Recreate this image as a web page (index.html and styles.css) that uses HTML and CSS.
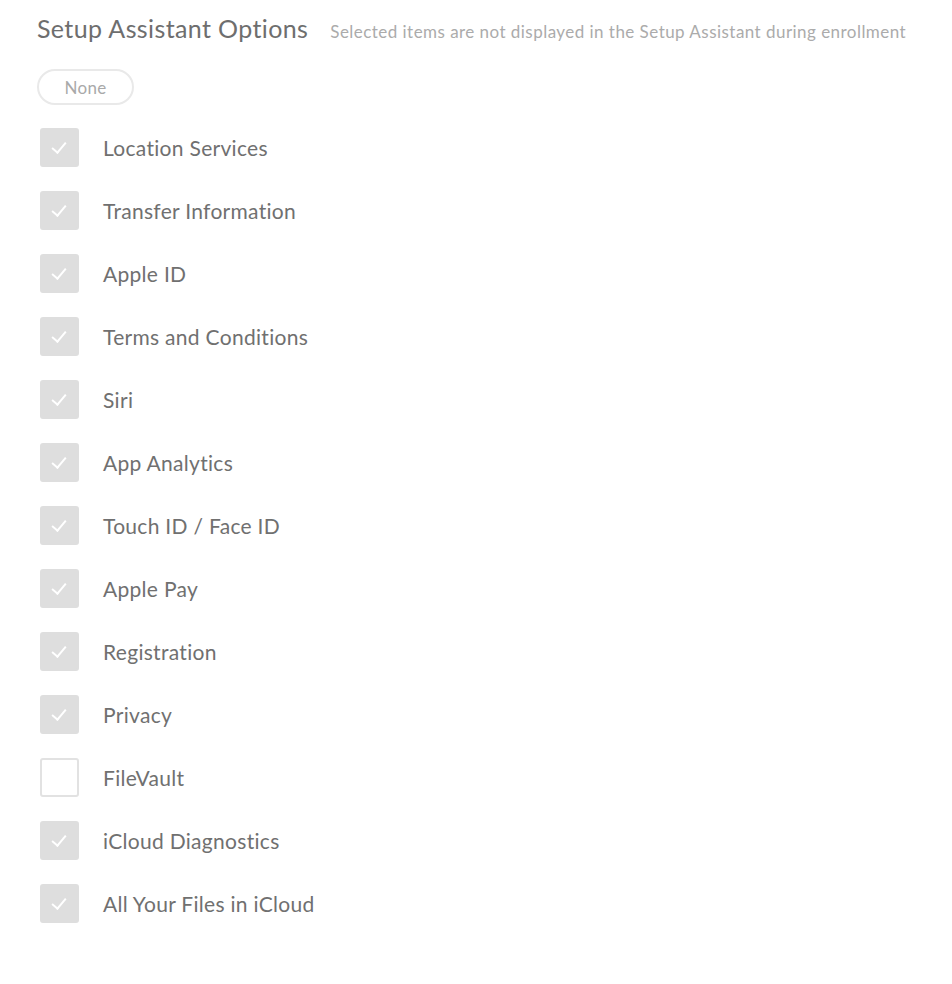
FILE: index.html
```html
<!DOCTYPE html>
<html lang="en">
<head>
    <meta charset="UTF-8">
    <meta name="viewport" content="width=device-width, initial-scale=1.0">
    <title>Setup Assistant Options</title>
    <link rel="stylesheet" href="styles.css">
</head>
<body>
    <div class="page">
        <div class="header">
            <h1>Setup Assistant Options</h1>
            <span class="hint">Selected items are not displayed in the Setup Assistant during enrollment</span>
        </div>
        <button class="pill-button">None</button>

        <ul class="option-list">
            <li class="option checked"><span class="box"></span>Location Services</li>
            <li class="option checked"><span class="box"></span>Transfer Information</li>
            <li class="option checked"><span class="box"></span>Apple ID</li>
            <li class="option checked"><span class="box"></span>Terms and Conditions</li>
            <li class="option checked"><span class="box"></span>Siri</li>
            <li class="option checked"><span class="box"></span>App Analytics</li>
            <li class="option checked"><span class="box"></span>Touch ID / Face ID</li>
            <li class="option checked"><span class="box"></span>Apple Pay</li>
            <li class="option checked"><span class="box"></span>Registration</li>
            <li class="option checked"><span class="box"></span>Privacy</li>
            <li class="option"><span class="box"></span>FileVault</li>
            <li class="option checked"><span class="box"></span>iCloud Diagnostics</li>
            <li class="option checked"><span class="box"></span>All Your Files in iCloud</li>
        </ul>
    </div>
</body>
</html>
```
FILE: styles.css
```css
body {
    font-family: 'Lato', 'Open Sans', sans-serif;
    background-color: #ffffff;
    color: #6f6f6f;
    margin: 0;
    padding: 0;
}
.page {
    padding: 13px 20px 0 37px;
}
.header {
    display: flex;
    align-items: baseline;
    gap: 22px;
}
h1 {
    font-size: 25px;
    font-weight: 400;
    color: #6e6e6e;
    margin: 0;
    letter-spacing: 0.38px;
}
.hint {
    font-size: 17px;
    color: #ababab;
    letter-spacing: 0.46px;
}
.pill-button {
    margin-top: 26px;
    width: 97px;
    height: 36px;
    border: 2px solid #e9e9e9;
    border-radius: 18px;
    background-color: #ffffff;
    color: #a9a9a9;
    font-family: inherit;
    font-size: 17px;
    letter-spacing: 0.3px;
    cursor: pointer;
}
.option-list {
    list-style: none;
    margin: 23px 0 0 3px;
    padding: 0;
}
.option {
    display: flex;
    align-items: center;
    gap: 24px;
    height: 39px;
    margin-bottom: 24px;
    font-size: 21px;
    color: #707070;
    letter-spacing: 0.3px;
}
.box {
    width: 35px;
    height: 35px;
    border: 2px solid #e2e2e2;
    border-radius: 3px;
    position: relative;
    flex: none;
}
.option.checked .box {
    background-color: #dedede;
    border-color: #dedede;
}
.option.checked .box::after {
    content: "";
    position: absolute;
    left: 13px;
    top: 9px;
    width: 6px;
    height: 12px;
    border-right: 2px solid #ffffff;
    border-bottom: 2px solid #ffffff;
    transform: rotate(40deg);
}
```
